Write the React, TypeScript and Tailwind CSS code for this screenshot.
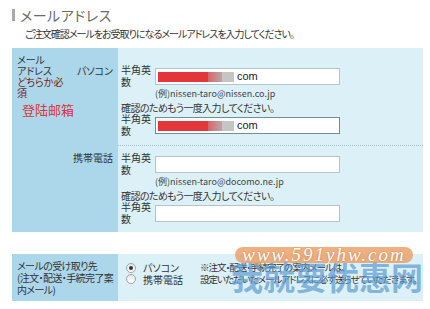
import React from "react";

const jp = "font-['Noto_Sans_CJK_JP',sans-serif] [font-feature-settings:'palt']";

function Label() {
  return (
    <div className="w-[37px] pl-[3px] text-[10px] leading-[12px] text-[#333] whitespace-nowrap">
      半角英
      <br />
      数
    </div>
  );
}

function Censored({ focus }: { focus?: boolean }) {
  return (
    <div
      className={`mt-[4px] h-[17px] w-[185px] bg-white border flex items-center pl-[2px] ${
        focus ? "border-[#6f8f96]" : "border-[#b9c2c6]"
      }`}
    >
      <div className="h-[10px] w-[50px] bg-[#e2363b]" />
      <div className="h-[10px] w-[14px] bg-gradient-to-r from-[#d4646a] to-[#b9a5a8]" />
      <div className="h-[10px] w-[12px] bg-[#c5c5c5]" />
      <span className="ml-[3px] text-[11px] font-medium text-[#222] font-['Liberation_Sans',sans-serif]">
        com
      </span>
    </div>
  );
}

function Empty() {
  return <div className="mt-[4px] h-[17px] w-[185px] bg-white border border-[#b9c2c6]" />;
}

function Group({ example, filled }: { example: string; filled?: boolean }) {
  return (
    <div>
      <div className="flex items-start">
        <Label />
        <div>
          {filled ? <Censored /> : <Empty />}
          <div className="mt-[3px] text-[9px] leading-[12px] text-[#444] whitespace-nowrap">
            {example}
          </div>
        </div>
      </div>
      <div className="mt-[2px] pl-[3px] text-[10px] leading-[12px] tracking-[-0.6px] text-[#333] whitespace-nowrap">
        確認のためもう一度入力してください。
      </div>
      <div className="flex items-start -mt-[1px]">
        <Label />
        {filled ? <Censored focus /> : <Empty />}
      </div>
    </div>
  );
}

function Radio({ checked }: { checked?: boolean }) {
  return (
    <span className="w-[10px] h-[10px] rounded-full border border-[#9aa5aa] bg-gradient-to-b from-[#e6e6e6] to-white flex items-center justify-center">
      {checked && <span className="w-[4px] h-[4px] rounded-full bg-[#333]" />}
    </span>
  );
}

export default function App() {
  return (
    <div className={`relative w-[430px] h-[309px] bg-white overflow-hidden ${jp}`}>
      {/* heading */}
      <div className="flex items-center pl-[12px] pt-[8px]">
        <div className="w-[3px] h-[12px] bg-[#a8a8a8]" />
        <div className="ml-[5px] text-[14px] leading-[14px] tracking-[0.5px] text-[#6a6a6a]">メールアドレス</div>
      </div>
      <div className="pl-[25px] mt-[5px] text-[10px] leading-[14px] tracking-[-1px] text-[#333] whitespace-nowrap">
        ご注文確認メールをお受取りになるメールアドレスを入力してください。
      </div>

      {/* address table */}
      <div className="mt-[7px] ml-[12px] w-[411px] flex">
        <div className="w-[106px] bg-[#acd7eb] flex">
          <div className="w-[58px] pl-[5px] pt-[6px] text-[10px] leading-[11px] whitespace-nowrap">
            <div className="text-[#333]">メール</div>
            <div className="text-[#333]">アドレス</div>
            <div className="text-[#7a1a1a]">どちらか必</div>
            <div className="text-[#7a1a1a]">須</div>
            <div className="mt-[5px] pl-[5px] text-[13px] leading-[14px] text-[#d8333b]">登陆邮箱</div>
          </div>
          <div className="flex-1 pr-[5px] text-right text-[10px] leading-[12px] text-[#333] whitespace-nowrap">
            <div className="h-[98px] pt-[17px]">パソコン</div>
            <div className="pt-[6px]">携帯電話</div>
          </div>
        </div>
        <div className="flex-1 bg-[#dcf0f8]">
          <div className="h-[98px] pt-[16px] border-b border-dotted border-[#9fbccb]">
            <Group example="(例)nissen-taro@nissen.co.jp" filled />
          </div>
          <div className="h-[86px] pt-[6px]">
            <Group example="(例)nissen-taro@docomo.ne.jp" />
          </div>
        </div>
      </div>

      {/* delivery table */}
      <div className="mt-[22px] ml-[12px] w-[411px] h-[47px] flex">
        <div className="w-[106px] bg-[#acd7eb] pl-[5px] pt-[6px] text-[10px] leading-[12px] tracking-[-0.6px] text-[#333] whitespace-nowrap">
          メールの受け取り先
          <br />
          (注文・配送・手続完了案
          <br />
          内メール)
        </div>
        <div className="flex-1 bg-[#dcf0f8] flex pt-[8px] text-[10px] leading-[11.5px] text-[#333]">
          <div className="pl-[8px] w-[82px] whitespace-nowrap">
            <div className="flex items-center gap-[7px]">
              <Radio checked />
              パソコン
            </div>
            <div className="flex items-center gap-[7px]">
              <Radio />
              携帯電話
            </div>
          </div>
          <div className="text-[9.5px] tracking-[-1px] whitespace-nowrap">
            ※注文・配送・手続完了の案内メールは、
            <br />
            設定いただいたメールアドレスに必ず送らせていただきます。
          </div>
        </div>
      </div>

      {/* watermark overlay */}
      <div className="absolute left-[235px] top-[247px] w-[178px] h-[16px] rounded-full bg-[#eb9c62]/80 flex items-center justify-center">
        <span className="text-[19px] italic text-white tracking-[2px] font-['Liberation_Serif',serif] [text-shadow:0_0_2px_#c87a40]">
          www.591yhw.com
        </span>
      </div>
      <div className="absolute left-[252px] top-[262px] w-0 h-0 border-l-[5px] border-r-[5px] border-t-[6px] border-l-transparent border-r-transparent border-t-[#eb9c62]/80" />
      <div className="absolute left-[231px] top-[258px] text-[32px] leading-[36px] font-bold text-[#5b9ad0]/70 font-['Noto_Sans_CJK_SC',sans-serif] whitespace-nowrap">
        我就要优惠网
      </div>
    </div>
  );
}
